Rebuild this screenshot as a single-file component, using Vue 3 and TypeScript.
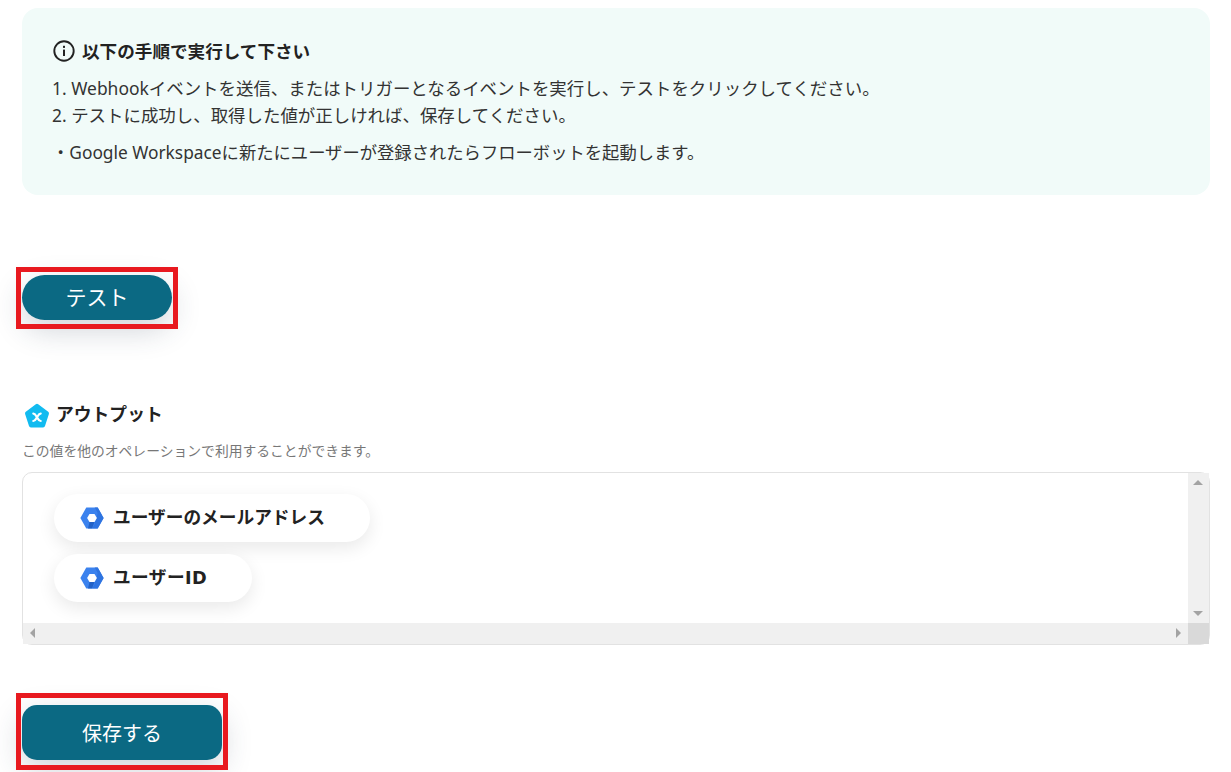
<script setup lang="ts">
const fields: string[] = ['ユーザーのメールアドレス', 'ユーザーID']
</script>

<template>
  <main class="page">
    <section class="notice">
      <h2 class="notice-title">
        <svg class="info" viewBox="0 0 22 22" aria-hidden="true">
          <circle cx="11" cy="11" r="9.700" fill="none" stroke="#222" stroke-width="1.900" />
          <rect x="10" y="9.600" width="2" height="6.400" fill="#222" />
          <rect x="10" y="5.800" width="2" height="2.100" fill="#222" />
        </svg>
        以下の手順で実行して下さい
      </h2>
      <ol class="steps">
        <li>1. Webhookイベントを送信、またはトリガーとなるイベントを実行し、テストをクリックしてください。</li>
        <li>2. テストに成功し、取得した値が正しければ、保存してください。</li>
      </ol>
      <p class="note">・Google Workspaceに新たにユーザーが登録されたらフローボットを起動します。</p>
    </section>

    <div class="test-wrap">
      <button class="btn btn-test" type="button">テスト</button>
      <span class="mark mark-test"></span>
    </div>

    <h3 class="out-title">
      <svg class="pent" viewBox="0 0 26 26" aria-hidden="true">
        <path d="M11.800 1.300a2 2 0 0 1 2.400 0l10 7.500a2 2 0 0 1 .7 2.200l-3.900 12.100a2 2 0 0 1-1.900 1.400H6.900a2 2 0 0 1-1.900-1.400L1.100 11a2 2 0 0 1 .7-2.200Z" fill="#12bbf0" />
        <path d="M9.300 10.600c1.700 0 2.300 1.400 3.700 3.700s2 3.700 3.700 3.700M16.700 10.600c-1.700 0-2.300 1.400-3.700 3.700s-2 3.700-3.700 3.700" stroke="#fff" stroke-width="2.200" stroke-linecap="round" fill="none" />
      </svg>
      <span class="out-text">アウトプット</span>
    </h3>
    <p class="out-desc">この値を他のオペレーションで利用することができます。</p>

    <section class="panel">
      <div class="chips">
        <div v-for="f in fields" :key="f" class="chip">
          <svg class="hex" viewBox="0 0 24 22" aria-hidden="true">
            <path d="M6.300.5h11.400L23.600 11l-5.900 10.500H6.300L.4 11Z" fill="#3b82ee" />
            <path d="M15 16.500l-3 5H17.700L23.600 11l-5.900-10.500h-3l3 5.500-3 10.500Z" fill="#2f74e0" />
            <path d="M9.500 7h5l2.400 4-2.400 4h-5L7.100 11Z" fill="#fff" />
            <path d="M9.500 15h5l-2.500 6.500H8Z" fill="#2262c8" />
          </svg>
          <span class="chip-text">{{ f }}</span>
        </div>
      </div>
      <div class="vbar">
        <i class="arr up"></i>
        <i class="arr down"></i>
      </div>
      <div class="hbar">
        <i class="arr left"></i>
        <i class="arr right"></i>
      </div>
      <div class="corner"></div>
    </section>

    <div class="save-wrap">
      <button class="btn btn-save" type="button">保存する</button>
      <span class="mark mark-save"></span>
    </div>
  </main>
</template>

<style>
html, body { margin: 0; background: #fff; overflow: hidden; }
</style>

<style scoped>
.page {
  box-sizing: border-box;
  width: 1231px;
  height: 772px;
  padding: 8px 21px 0 22px;
  font-family: "Noto Sans", "Noto Sans CJK JP", sans-serif;
  color: #333;
  overflow: hidden;
}
.notice {
  box-sizing: border-box;
  height: 187px;
  padding: 29px 31px 0;
  background: #f1fbf9;
  border-radius: 16px;
}
.notice-title {
  display: flex;
  align-items: center;
  gap: 7px;
  margin: 0;
  height: 26px;
  font-size: 17.600px;
  font-weight: 700;
  color: #222;
}
.info { width: 22px; height: 22px; margin-top: 2px; }
.steps {
  list-style: none;
  margin: 12px 0 0 -1px;
  padding: 0;
  font-size: 17.450px;
  line-height: 27px;
}
.note {
  margin: 10px 0 0 -1px;
  font-size: 17.320px;
  line-height: 27px;
}
.btn {
  display: block;
  border: 0;
  padding: 0;
  background: #0b6983;
  color: #fff;
  font-family: inherit;
  box-shadow: 0 10px 30px rgba(40, 60, 80, .22);
}
.test-wrap {
  position: relative;
  width: 150px;
  margin-top: 80px;
}
.btn-test {
  width: 150px;
  height: 45px;
  padding-bottom: 4px;
  border-radius: 23px;
  font-size: 21px;
}
.mark {
  position: absolute;
  box-sizing: border-box;
  border: 5px solid #e8191f;
}
.mark-test { left: -6px; top: -8px; width: 162px; height: 62px; }
.out-title {
  display: flex;
  align-items: flex-start;
  gap: 6px;
  margin: 84px 0 0 2px;
  height: 26px;
  font-size: 17.800px;
  font-weight: 700;
  color: #222;
}
.out-text { line-height: 20px; }
.pent { width: 26px; height: 26px; margin-top: -1px; }
.out-desc {
  margin: 11px 0 0;
  font-size: 13.800px;
  line-height: 20px;
  color: #777;
}
.panel {
  display: grid;
  grid-template-columns: 1fr 21px;
  grid-template-rows: 1fr 21px;
  box-sizing: border-box;
  height: 173px;
  margin-top: 11px;
  border: 1px solid #e2e2e2;
  border-radius: 10px;
  background: #fff;
}
.chips {
  display: flex;
  flex-direction: column;
  align-items: flex-start;
  gap: 12px;
  padding: 21px 0 0 31px;
  overflow: hidden;
}
.chip {
  display: flex;
  align-items: center;
  gap: 9px;
  height: 48px;
  padding: 0 45px 0 26px;
  border-radius: 24px;
  background: #fff;
  box-shadow: 0 6px 18px rgba(0, 0, 0, .09);
  font-family: "DejaVu Sans", "Noto Sans CJK JP", sans-serif;
  font-size: 17.700px;
  font-weight: 700;
  color: #222;
}
.chip-text { padding-bottom: 4px; }
.chip:nth-child(2) { letter-spacing: .4px; }
.hex { width: 24px; height: 22px; }
.vbar {
  position: relative;
  background: #f0f0f0;
}
.hbar {
  position: relative;
  background: #f0f0f0;
}
.corner { background: #d9d9d9; }
.arr {
  position: absolute;
  width: 0;
  height: 0;
  border-style: solid;
  border-color: transparent;
}
.up {
  top: 7px;
  left: 5px;
  border-width: 0 5px 5px;
  border-bottom-color: #a3a3a3;
}
.down {
  bottom: 7px;
  left: 5px;
  border-width: 5px 5px 0;
  border-top-color: #a3a3a3;
}
.left {
  top: 5px;
  left: 7px;
  border-width: 5px 5px 5px 0;
  border-right-color: #a3a3a3;
}
.right {
  top: 5px;
  right: 7px;
  border-width: 5px 0 5px 5px;
  border-left-color: #a3a3a3;
}
.save-wrap {
  position: relative;
  width: 200px;
  margin-top: 60px;
}
.btn-save {
  width: 200px;
  height: 55px;
  border-radius: 15px;
  font-size: 20px;
}
.mark-save { left: -6px; top: -12px; width: 212px; height: 77px; }
</style>
